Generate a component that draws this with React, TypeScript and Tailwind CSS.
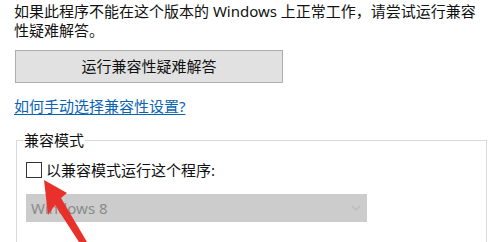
import React from 'react';

const font = { fontFamily: '"Noto Sans", "Noto Sans CJK SC", sans-serif' };

const RedArrow: React.FC = () => (
  <svg
    className="absolute left-0 top-0 pointer-events-none"
    width="488"
    height="242"
    viewBox="0 0 488 242"
  >
    <polygon
      points="44,180 67,193 61,198 87,242 79,242 55,205 48,215"
      fill="#e8312b"
    />
  </svg>
);

export default function App() {
  return (
    <div
      className="relative w-[488px] h-[242px] overflow-hidden bg-white text-[#111] text-[15px] leading-[19px]"
      style={font}
    >
      <div className="pl-[14px] pt-[2px]">
        <p>
          如果此程序不能在这个版本的 Windows 上正常工作，请尝试运行兼容
          <br />
          性疑难解答。
        </p>

        <button className="mt-[10px] ml-[1px] w-[268px] h-[33px] bg-[#e1e1e1] border border-[#adadad] text-[15px] text-[#111]">
          运行兼容性疑难解答
        </button>

        <div className="mt-[14px]">
          <a className="text-[#0a64b4] underline underline-offset-2 decoration-1">
            如何手动选择兼容性设置?
          </a>
        </div>
      </div>

      <fieldset className="mt-[15px] ml-[16px] mr-[1px] h-[130px] border border-[#dadada] px-0">
        <legend className="ml-[6px] px-[1px] leading-[18px]">兼容模式</legend>

        <div className="pl-[9px] pt-[12px]">
          <label className="flex items-center gap-[4px]">
            <span className="w-[16px] h-[16px] border border-[#333] bg-white" />
            <span className="leading-[18px]">以兼容模式运行这个程序:</span>
          </label>

          <div className="mt-[15px] w-[341px] h-[28px] bg-[#cccccc] flex items-center justify-between pl-[5px] pr-[6px] text-[#8a8a8a]">
            <span>Windows 8</span>
            <svg width="10" height="7" viewBox="0 0 10 7">
              <path d="M1 1 L5 5 L9 1" fill="none" stroke="#b8b8b8" strokeWidth="1.1" />
            </svg>
          </div>
        </div>
      </fieldset>

      <RedArrow />
    </div>
  );
}
